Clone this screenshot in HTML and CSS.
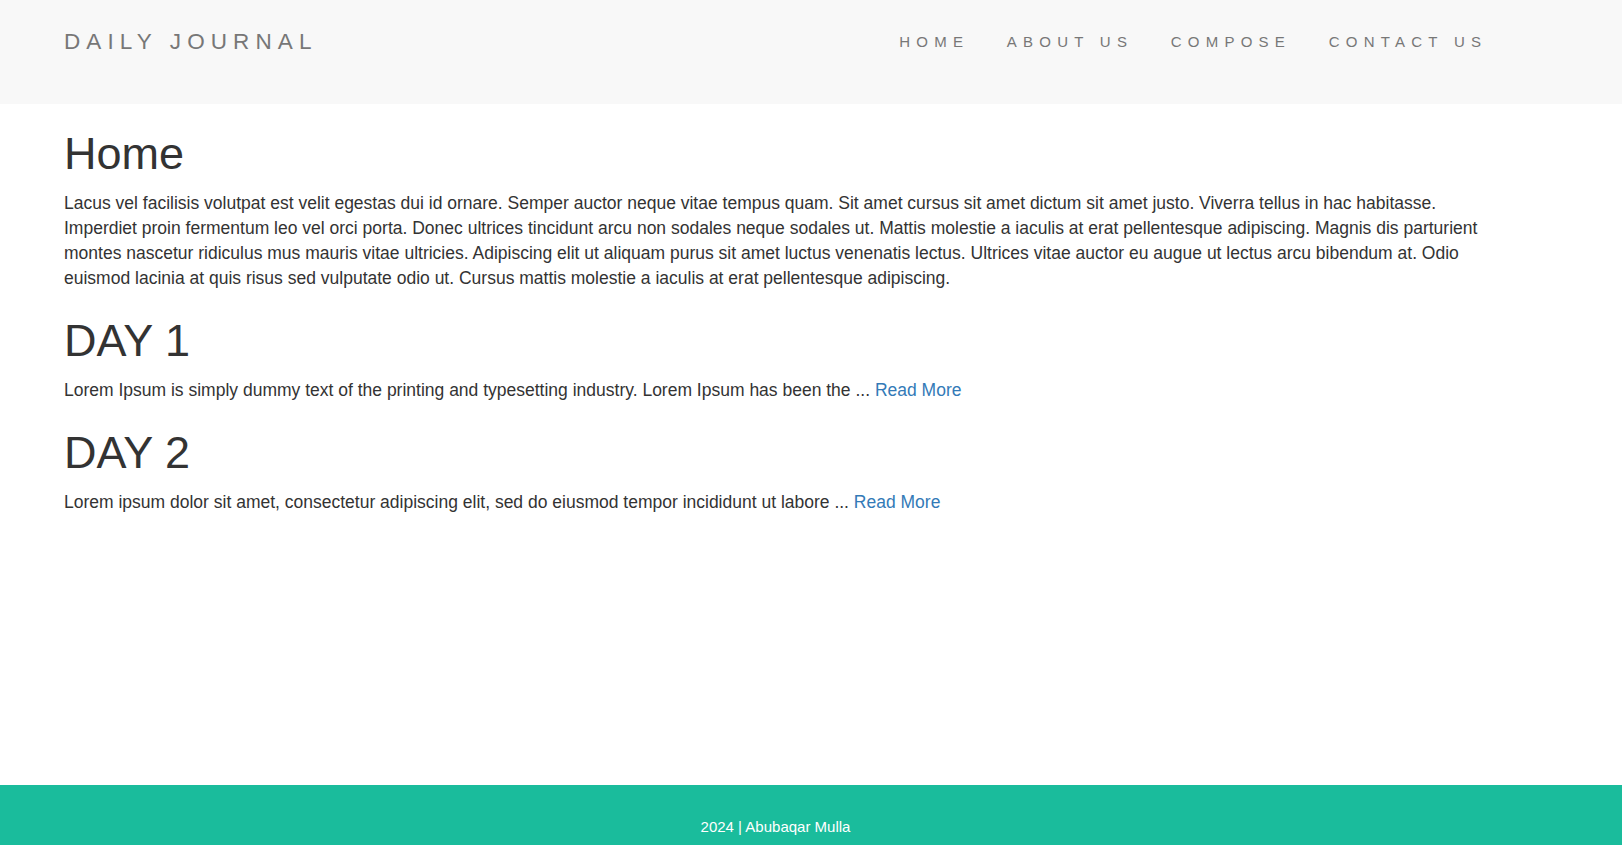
FILE: index.html
```html
<!DOCTYPE html>
<html lang="en">
<head>
<meta charset="utf-8">
<title>Daily Journal</title>
<link rel="stylesheet" href="styles.css">
</head>
<body>
<div class="page">
  <nav class="navbar">
    <a class="brand" href="#">DAILY JOURNAL</a>
    <ul class="nav">
      <li><a href="#">HOME</a></li>
      <li><a href="#">ABOUT US</a></li>
      <li><a href="#">COMPOSE</a></li>
      <li><a href="#">CONTACT US</a></li>
    </ul>
  </nav>
  <main class="content">
    <h1>Home</h1>
    <p>Lacus vel facilisis volutpat est velit egestas dui id ornare. Semper auctor neque vitae tempus quam. Sit amet cursus sit amet dictum sit amet justo. Viverra tellus in hac habitasse. Imperdiet proin fermentum leo vel orci porta. Donec ultrices tincidunt arcu non sodales neque sodales ut. Mattis molestie a iaculis at erat pellentesque adipiscing. Magnis dis parturient montes nascetur ridiculus mus mauris vitae ultricies. Adipiscing elit ut aliquam purus sit amet luctus venenatis lectus. Ultrices vitae auctor eu augue ut lectus arcu bibendum at. Odio euismod lacinia at quis risus sed vulputate odio ut. Cursus mattis molestie a iaculis at erat pellentesque adipiscing.</p>
    <h1>DAY 1</h1>
    <p>Lorem Ipsum is simply dummy text of the printing and typesetting industry. Lorem Ipsum has been the ... <a href="#">Read More</a></p>
    <h1>DAY 2</h1>
    <p>Lorem ipsum dolor sit amet, consectetur adipiscing elit, sed do eiusmod tempor incididunt ut labore ... <a href="#">Read More</a></p>
  </main>
  <footer class="footer">
    <p>2024 | Abubaqar Mulla</p>
  </footer>
</div>
</body>
</html>
```

FILE: styles.css
```css
html, body {
  margin: 0;
  padding: 0;
}
body {
  font-family: "Liberation Sans", Arial, Helvetica, sans-serif;
  font-size: 17.5px;
  line-height: 25px;
  color: #333;
  background: #fff;
}
.page {
  min-height: 100vh;
  display: flex;
  flex-direction: column;
}
a {
  color: #337ab7;
  text-decoration: none;
}
.navbar {
  height: 104px;
  box-sizing: border-box;
  background: #f8f8f8;
  display: flex;
  align-items: flex-start;
  justify-content: space-between;
  padding: 29px 116px 0 64px;
}
.brand {
  color: #777;
  font-size: 22.5px;
  line-height: 25px;
  letter-spacing: 6.1px;
}
.nav {
  list-style: none;
  margin: 0;
  padding: 0;
  display: flex;
}
.nav a {
  display: block;
  color: #777;
  font-size: 15px;
  line-height: 25px;
  letter-spacing: 6.25px;
  padding: 0 18.75px;
}
.content {
  flex: 1;
  padding: 0 133px 0 64px;
}
h1 {
  font-size: 45px;
  line-height: 49.5px;
  font-weight: 500;
  margin: 25px 0 12.5px;
}
p {
  margin: 0 0 12.5px;
}
.footer {
  background: #1abc9c;
  color: #fff;
  font-size: 15px;
  line-height: 21.4px;
  height: 60px;
  box-sizing: border-box;
  padding: 31px 71px 0 0;
  text-align: center;
  overflow: hidden;
}
.footer p {
  margin: 0;
}
```
